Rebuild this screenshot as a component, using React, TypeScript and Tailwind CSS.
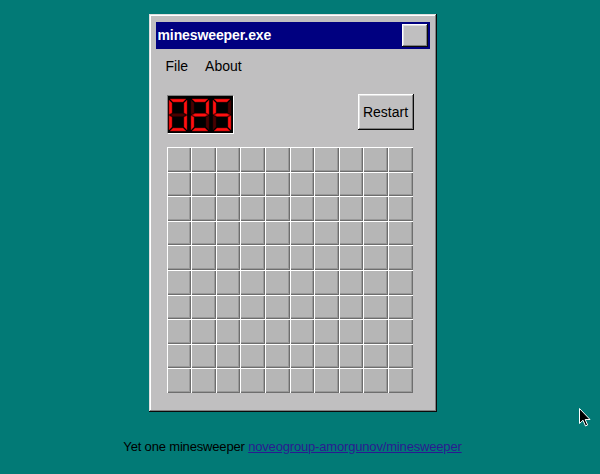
const SEGMENTS: Record<string, string> = {
  a: '2,1 18,1 15,4 5,4',
  b: '19,2 19,16.5 16,15 16,5',
  c: '19,17.5 19,32 16,29 16,19',
  d: '5,30 15,30 18,33 2,33',
  e: '1,17.5 4,19 4,29 1,32',
  f: '1,2 4,5 4,15 1,16.5',
  g: '2,17 5,15.5 15,15.5 18,17 15,18.5 5,18.5',
}

const DIGITS: Record<string, string> = {
  '0': 'abcdef',
  '1': 'bc',
  '2': 'abged',
  '3': 'abgcd',
  '4': 'fgbc',
  '5': 'afgcd',
  '6': 'afgedc',
  '7': 'abc',
  '8': 'abcdefg',
  '9': 'abcdfg',
}

function Digit({ value }: { value: string }) {
  const on = DIGITS[value] ?? ''
  return (
    <svg width="20" height="34" viewBox="0 0 20 34">
      {Object.entries(SEGMENTS).map(([k, pts]) => (
        <polygon
          key={k}
          points={pts}
          fill={on.includes(k) ? '#ff1010' : '#4a0000'}
          stroke={on.includes(k) ? '#9a0000' : '#2a0000'}
          strokeWidth="0.5"
        />
      ))}
    </svg>
  )
}

function Counter({ value }: { value: number }) {
  const text = String(value).padStart(3, '0')
  return (
    <div className="flex w-[67px] h-[39px] items-center justify-center gap-[2px] bg-black border border-t-[#808080] border-l-[#808080] border-r-white border-b-white">
      {text.split('').map((d, i) => (
        <Digit key={i} value={d} />
      ))}
    </div>
  )
}

function Cursor() {
  return (
    <svg className="absolute left-[579px] top-[408px]" width="12" height="19" viewBox="0 0 12 19">
      <path d="M0.5 0.5 L0.5 15.5 L4 12.2 L6.5 18 L8.6 17 L6.2 11.5 L11 11.5 Z" fill="#000" stroke="#fff" strokeWidth="1" />
    </svg>
  )
}

export default function App() {
  const cells = Array.from({ length: 100 })

  return (
    <div className="relative min-h-screen bg-[#027a76] font-['Liberation_Sans',Arial,sans-serif]">
      <div className="w-[585px] flex flex-col items-center pt-[14px]">
        <div className="w-[288px] bg-[#c0bfc0] pt-[8px] px-[7px] pb-[19px] shadow-[inset_-1px_-1px_#0a0a0a,inset_1px_1px_#dfdfdf,inset_-2px_-2px_#808080,inset_2px_2px_#ffffff]">
          <div className="h-[27px] bg-[#000080] flex items-center justify-between pl-[2px] pr-[2px]">
            <span className="text-white font-bold text-[14px] tracking-[-0.1px]">minesweeper.exe</span>
            <div className="w-[26px] h-[23px] bg-[#c0bfc0] shadow-[inset_-1px_-1px_#0a0a0a,inset_1px_1px_#ffffff,inset_-2px_-2px_#808080,inset_2px_2px_#dfdfdf]" />
          </div>

          <div className="flex gap-[17px] pl-[10px] pt-[9px] text-[14px] leading-[16px] text-black">
            <span>File</span>
            <span>About</span>
          </div>

          <div className="flex items-start justify-between pl-[11px] pr-[16px] mt-[21px]">
            <Counter value={25} />
            <button className="w-[56px] h-[36px] -mt-[1px] bg-[#c0bfc0] text-[14px] text-black shadow-[inset_-1px_-1px_#0a0a0a,inset_1px_1px_#ffffff,inset_-2px_-2px_#808080,inset_2px_2px_#dfdfdf]">
              Restart
            </button>
          </div>

          <div className="ml-[11px] mt-[13px] w-[246px] grid grid-cols-10">
            {cells.map((_, i) => (
              <div
                key={i}
                className="h-[24.6px] bg-[#b6b6b6] shadow-[inset_1px_1px_#ffffff,inset_-1px_-1px_#6e6e6e,inset_-2px_-2px_#999999]"
              />
            ))}
          </div>
        </div>

        <p className="mt-[25px] text-[13px] tracking-[-0.17px] text-black">
          Yet one minesweeper{' '}
          <a href="#" className="text-[#2a1a90] underline">
            noveogroup-amorgunov/minesweeper
          </a>
        </p>
      </div>
      <Cursor />
    </div>
  )
}
